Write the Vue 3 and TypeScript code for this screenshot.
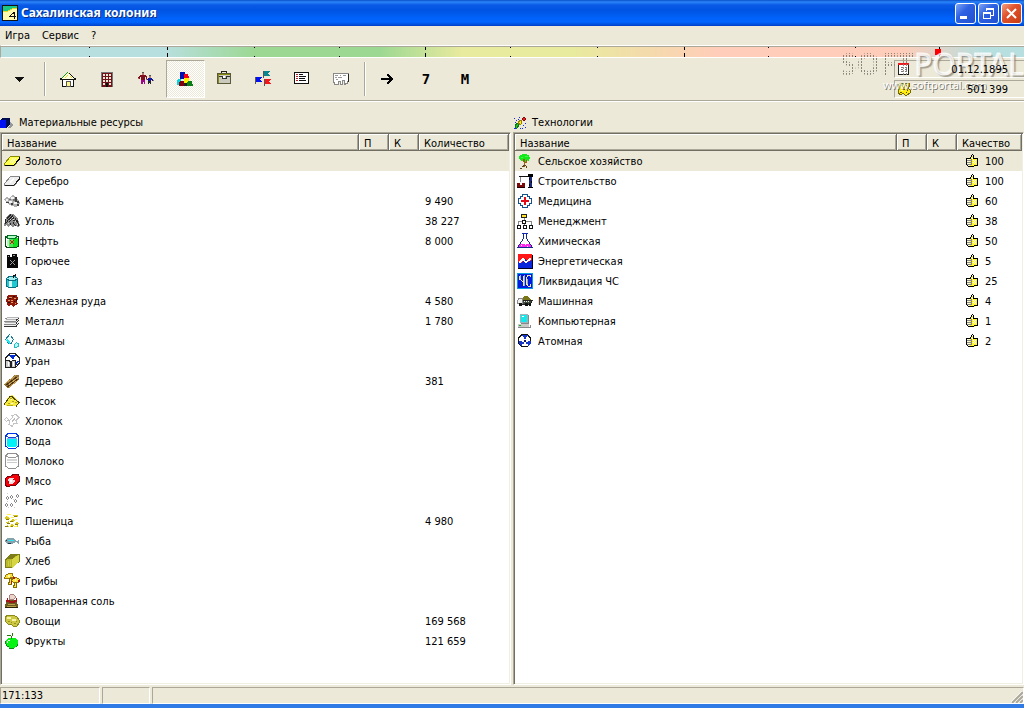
<script setup lang="ts">
import { ref } from 'vue'

// [path data, fill, stroke]
type Shape = [string, string, string?]

const icons: Record<string, Shape[]> = {
  gold: [['M6.5 3.5H15.5V5.5L10.5 12.5H.5V10.5Z', '#ffff50', '#8a8a00'], ['M15.5 4V6L9.5 12.5H.5', 'none', '#000'], ['M6 9.5L9 5.5M8 10L12 5', 'none', '#ffffd0']],
  silver: [['M6.5 3.5H15.5V5.5L10.5 12.5H.5V10.5Z', '#eee', '#888'], ['M15.5 4V6L9.5 12.5H.5', 'none', '#222'], ['M6 9.5L10 5.5', 'none', '#fff']],
  stone: [['M0 6L3 4 5 6 8 2 11 3 12 6 15 7 16 11 12 14 8 13 5 12 2 9Z', '#b0b0b0'], ['M2 6h2v2h-2zM7 4h3v2h-3zM5 8h3v2h-3zM10 9h3v2h-3z', '#f4f4f4'], ['M11 4h2v4h2v2h-2v-1h-2zM7 10h2v2h-2zM2 9h3v1h-3zM13 11h2v2h-2z', '#404040'], ['M5 6h2v1h-2zM9 6h2v2h-2z', '#707070']],
  coal: [['M6 1H9L12 3 14 6 16 12 14 14 11 12 9 15 7 12 4 14 3 12 0 13 1 7 3 3Z', '#8c8c8c'], ['M7 1.5L3 5.5M9 2.5L4.5 7M10 4.5L5 9M2 6.5L1 11M4 7.5L2.5 10M6 9.5V12M9 6.5L12 9M11 5.5L14 10M9 9.5L12 13M13 7.5L15 13', 'none', '#262626'], ['M8 4h1v1H8zM6 6h1v1H6zM9 6h1v1H9zM11 8h1v1h-1zM4 10h1v1H4zM13 11h1v1h-1z', '#ddd']],
  oil: [['M2 4.5L4 2H12L14.5 4V13L12.5 14.5H3L1.5 13V4Z', '#fff', '#0a4a12'], ['M9 5h5v8l-2 1H9z', '#10e020'], ['M3 7h2v6h-2z', '#b8f5b8'], ['M5 6h4v8H5z', '#48e858'], ['M3 3.5L5 2.5H12L13 4L11 5.5H4Z', '#b0ffc0', '#087830'], ['M6 7h1v1H6zM9 7h1v1H9zM7 8h2v2H7zM6 10h1v1H6zM9 10h1v1H9z', '#e01010']],
  fuel: [['M3 2H6V4H8V1H13V4H14V14.5H3Z', '#080808'], ['M6 7h1v1H6zM10 7h1v1h-1zM7 8h1v1H7zM9 8h1v1H9zM8 9h1v1H8zM7 10h1v1H7zM9 10h1v1H9zM6 11h1v1H6zM10 11h1v1h-1z', '#999'], ['M4 3.5H5M9 2.5H11', 'none', '#999']],
  gas: [['M2.5 5.5H13.5V13L11 14.5H5L2.5 13Z', '#20c8d0', '#087080'], ['M5 7h3v7H5z', '#d8ffff'], ['M2.5 5.5L5 3.5H11L13.5 5.5L11 7.5H5Z', '#a0eeee', '#087080'], ['M9.5 4.5V2.5H11.5V1', 'none', '#111']],
  ore: [['M4 2H13L14 5 13 9 14 11 11 12 9 14 8 12 4 13 3 10 2 7Z', '#901808'], ['M5 4.5H8M10 5.5H12M4 7.5H6M7 9.5H9M11 10.5H12M7 7.5H9', 'none', '#dba070'], ['M9 3.5H11M5 5.5H7M4 9.5H6M10 8.5H11M12.5 6V8', 'none', '#281008']],
  metal: [['M3 4H15V10L12 13H0V10Z', '#f0f0f0'], ['M3 4.5H15M2 6.5H13M1 9.5H12', 'none', '#b5b5b5'], ['M1 5.5H3M0 8.5H12M0 11.5H12', 'none', '#888'], ['M0 13.5H12L15 10M12 10.5L15 7M12 7.5L15 5', 'none', '#333']],
  diamond: [['M1.5 6.5L5.5 1.5L9.5 6.5L7 10.5H5Z', '#e8ffff', '#1c7a94'], ['M3 6L6 8V12L2 8Z', '#20e8f0'], ['M6 2V10', 'none', '#fff'], ['M10.5 11.5L12.5 9.5L14.5 11V13L12.5 14.5H11L10 13Z', '#b0ffff', '#28bcc4']],
  uranium: [['M6 .5H11L15.5 5V10L11.5 14.5H6L1.5 10V5Z', '#fff', '#222'], ['M5 2H12L9 7ZM10 9L15 8L12 13ZM6 8L2 7V9Z', '#002bd2'], ['M1.5 8.5L3 7.5H5L6.5 9V14.5H1.5ZM7.5 8.5L9 7.5H11L11.5 9V14.5H7.5Z', '#ccc', '#222'], ['M4 9V13M9.5 9V13', 'none', '#fff']],
  wood: [['M0 11L11 2H15V7L5 15H3Z', '#94713a'], ['M1 10.5L12 2.5M5 11.5L15 4M5 14.5L14 7', 'none', '#c9a155'], ['M2 12L13 4M3 14L14 6', 'none', '#4a3310']],
  sand: [['M5 3L8 2 10 4 13 6 15 9 12 13 2 13 0 11Z', '#f4e93c'], ['M0 11.5L6 3.5H8L10 5.5L15 9.5L12 13.5', 'none', '#4c4300'], ['M6 5.5H8M8 8.5H10M4 10.5H6M11 9.5H13M3 12.5H9', 'none', '#b1a51b'], ['M7 6h1v1H7zM7 10h2v1H7z', '#fff']],
  cotton: [['M.5 6.5L2.5 4.5L4.5 6.5L2.5 8.5ZM5.5 7.5L8.5 4.5L8 2.5L12 1.5L15 4.5L12 7.5L13 10.5L9.5 10.5L8.5 13.5L5 11.5Z', '#fff', '#c4c4c4'], ['M8 8.5L11 5.5M3 7.5H6', 'none', '#bbb']],
  water: [['M1.5 3V13L4 15H12L14.5 13V3L12 .5H4Z', '#fff', '#0034e6'], ['M3 6H13V13L11 14H5L3 13Z', '#00f2f8'], ['M2 3h2v1H2zM4 4h8v1H4zM12 3h2v1h-2z', '#1848d0'], ['M3 5.5H13', 'none', '#8af']],
  milk: [['M1.5 3V13L4 15H12L14.5 13V3L12 .5H4Z', '#fff', '#909090'], ['M3 6H13V8H3Z', '#d6d6d6'], ['M2 3h2v1H2zM4 4h8v1H4zM12 3h2v1h-2z', '#999'], ['M3 9.5H13', 'none', '#ccc']],
  meat: [['M1 6L4 3L7 3L10 1H14L15.5 4V8L12 12L8 12L4 14L1 12Z', '#f40008', '#760008'], ['M5 5h5l1 3-3 3H5L4 8z', '#f0dede'], ['M6 7h2v2H6z', '#fff'], ['M4 8h1v2H4zM9 6h1v1H9z', '#b00']],
  rice: [['M3 3h1v1H3zM2 4h1v2H2zM4 4h1v2H4zM3 6h1v1H3zM7 2h1v1H7zM6 3h1v2H6zM8 3h1v2H8zM7 5h1v1H7zM13 1h1v1h-1zM12 2h1v2h-1zM14 2h1v2h-1zM13 4h1v1h-1zM2 10h1v1H2zM1 11h1v2H1zM3 11h1v2H3zM2 13h1v1H2zM7 10h1v1H7zM6 11h1v2H6zM8 11h1v2H8zM7 13h1v1H7zM11 6h1v1h-1zM10 7h1v2h-1zM12 7h1v2h-1zM11 9h1v1h-1z', '#8a8a8a'], ['M3 .5H4M9 6.5H10M3 8.5H4M4 14.5H5M10 14.5H11', 'none', '#ccc']],
  wheat: [['M1 4.5L3 3L6 5L5 7H2ZM9 2.5L12 1.5L15 3L12 4ZM6 8L9 6L11 8L8 9ZM2 9L5 8L6 11H3ZM10 10L14 9L15 11L12 12ZM7 11L10 12L9 14H6ZM1 13L4 12L5 14H2ZM11 13L14 12V14H11Z', '#d8c81c'], ['M2 6.5H5M10 3.5H13M6 8.5H9M3 10.5H6M11 11.5H14M7 13.5H9M1 13.5H4', 'none', '#8a7a06'], ['M3 1.5H7M7 4.5H10M11 6.5H13M6 12.5H7M10 13.5H13M3 3.5H4', 'none', '#fff050']],
  fish: [['M0 8L4 5H9L13 8L15 6V11L12 9L8 11H3Z', '#84a3ad'], ['M4 7H10V8H4z', '#30e3f0'], ['M2 7h1v1H2zM4 10h3v1H4z', '#234']],
  bread: [['M1.5 7L7 1.5H15.5V8L8 14.5H1.5Z', '#b8b82c', '#7c7c18'], ['M1 6L7 1H15L8 6Z', '#7c7c18'], ['M8 6V15L15 9V2Z', '#d6d642'], ['M4 8V13M6 7V13', 'none', '#cdcd40']],
  mushroom: [['M.5 5L2 2L5 .5H8L9.5 4L6 5H3ZM7.5 8L9 5L12 4.5L15 6V9L11 10Z', '#ffe43b', '#947309'], ['M5 5H7V11H4V9H5ZM10 9H12V14H9V12H10Z', '#ffe83b', '#806b09'], ['M9 4h2v2H9zM14 7h2v2h-2zM7 8h1v3H7z', '#b01818'], ['M4 2h2v2H4zM11 6h1v2h-1z', '#fffac0']],
  salt: [['M4 7L2 10L1 13L2 15H13L14 13L13 9L11 7Z', '#6d5c20'], ['M5 3L7 1H9L12 4L10 6H5Z', '#ead4cb', '#a8827a'], ['M3 5H4V7H6V8H10V7H12V5H13V9H11V10H5V9H2V7H3Z', '#a01515'], ['M4 11.5H11M3 13.5H12', 'none', '#b8a146'], ['M1 14.5H14', 'none', '#2c2309']],
  vegetable: [['M1 4L4 2H9L13 4L15 7V10L13 13H9L7 11H4L1 8Z', '#cdc843', '#8e8a1a'], ['M3 4h4v2H3zM8 6h4v2H8z', '#f5f2a5'], ['M4 8h2v1H4zM10 10h2v1h-2zM7 9h1v1H7zM12 8h1v1h-1z', '#98911d']],
  apple: [['M2 7L4 5H6L7 6L9 5H12L14 8V11L12 14L9 15H6L3 13L2 11Z', '#08f215'], ['M1 8h1v3H1zM2 11h1v2H2zM3 13h2v1H3zM5 15h5v1H5zM12 13h1v1h-1zM13 11h1v2h-1z', '#098a15'], ['M4 7h2v1H4zM3 8h1v2H3z', '#eaffec'], ['M7.5 6V3.5L8.5 2V0M3 2.5H7', 'none', '#297609']],
  agro: [['M3 2L7 1L12 2L13 5L12 8L9 7L10 10L7 9L4 8L2 5Z', '#16e91b'], ['M4 4h2v1H4zM8 3h3v1H8zM9 7h2v1H9z', '#38ff40'], ['M7.5 6V14M9 7V9H8M6 6V8H7', 'none', '#a45a1a'], ['M3 15h2v1H3zM5 13h2v1H5zM9 13h1v2H9zM6 12h3v1H6z', '#5b4518']],
  building: [['M1.5 3.5H14', 'none', '#111'], ['M3.5 4V9', 'none', '#888'], ['M11 1H16V4H11ZM11 14H16V15H11Z', '#000'], ['M12 4H15V14H12Z', '#1a2a78'], ['M12 5h1v2h-1zM14 8h1v2h-1zM12 11h1v2h-1z', '#000'], ['M0 10H3V12H5V10H8V15H0Z', '#7a0a0a'], ['M0 14.5H8', 'none', '#200']],
  medicine: [['M5.5 1.5H10.5V3.5H12.5V5.5H14.500V10.5H12.5V12.5H10.5V14.5H5.5V12.5H3.5V10.5H1.5V5.5H3.5V3.5H5.5Z', '#fff', '#15508b'], ['M7 4H9V7H12V9H9V12H7V9H4V7H7Z', '#e20c18']],
  management: [['M7.5 4V8M1.5 12V8.5H14.5V12M7.5 8V12', 'none', '#888'], ['M4.5 1.5H9.5V4.5H4.5Z', '#ffe52e', '#222'], ['M5.500 7.5H8.5V10.5H5.5ZM.5 12.5H3.5V15.5H.5ZM6.5 12.5H9.5V15.5H6.5ZM12.5 12.5H15.5V15.5H12.5Z', '#fff', '#111']],
  chemistry: [['M6.5 1V5.5L.5 14.5H15.5L9.5 5.5V1', '#fff', '#102a90'], ['M5 .5H11', 'none', '#102ab0'], ['M3 11H13L14.5 14H1.5Z', '#ff28ed'], ['M4 12h1v1H4zM8 11h1v1H8zM10 13h1v1h-1z', '#fff']],
  energy: [['M1 1H15V15H1Z', '#0826dc'], ['M1 1H15V7L11 9L8 6L4 10L1 9Z', '#ff1717'], ['M2.5 9L6 5.5L9 9L13.5 5', 'none', '#fff'], ['M2.5 10L6 6.5L9 10L13.5 6', 'none', '#fff'], ['M1 15.5H15.5V2', 'none', '#002']],
  emergency: [['M.5 .5H15.5V15.5H.5Z', '#001be0', '#0898e8'], ['M2.5 2.5V6L5 8H6.5V13M6.5 2.5V8M13.5 4V2.5H11L9.5 5V11L11 13H13.5V11', 'none', '#f5e5a0'], ['M3.5 2V6M7.5 2V13M10.5 6V11', 'none', '#9aafc8']],
  machine: [['M4 6L8 3H11L14 7H5Z', '#7a7718'], ['M5 7H15.5L13.5 11H5Z', '#3f4a3c', '#222'], ['M.5 7.5L2 5.5H5V10.5H.5Z', '#eee', '#888'], ['M2 10h3v3H2zM8 10h3v3H8zM12 10h2v3h-2z', '#111'], ['M7 8h1v1H7zM9 8h1v1H9zM11 8h1v1h-1z', '#eee']],
  computer: [['M3.5 1.5H10.5V9.5H3.5Z', '#12e9ed', '#a0b4b8'], ['M1 11H12V14H1ZM5 10H9V11H5Z', '#c8c8c8'], ['M11.5 2V10M4 10.5H12M1 14.5H13V12', 'none', '#888'], ['M2 12h2v1H2z', '#10b510'], ['M5 3h2v1H5z', '#fff']],
  atomic: [['M5 1.5H10L13.5 5V10L10.5 13.5H5L1.5 10V5Z', '#fff', '#111'], ['M5 2H11L10 4H9V6H7V4H6ZM2 8H5V9H7V11H5V13H4L2 10ZM9 9H11V8H14V10L12 13H11V11H9Z', '#1538ca'], ['M7 7H9V9H7Z', '#101060']],
  thumb: [['M6 3H9V6H13V13H10V14H3V12H2V6H5Z', '#fff52e'], ['M2 6H5V13H3V12H2Z', '#fffdd0'], ['M7 1h1v1H7zM6 2h1v2H6zM8 2h1v4H8zM5 4h1v2H5zM9 5h4v1H9zM12 6h1v7h-1zM9 12h3v1H9zM3 13h6v1H3zM2 12h1v1H2zM1 5h4v1H1zM1 6h1v6H1z', '#000'], ['M2 7.5H6M2 9.5H6M2 11.5H6M6.5 6V12', 'none', '#888'], ['M8 7h1v1H8zM10 7h1v1h-1zM9 8h1v1H9zM8 9h1v1H8zM10 9h1v1h-1zM9 10h1v1H9zM7 5h1v1H7z', '#fff']],
  cube: [['M0 4H6V12H0Z', '#0010f0'], ['M0 4L3 2H10L6 4ZM6 4L10 2V9L6 12Z', '#000c50'], ['M10 6L13 9V10L10 12H7L10 9Z', '#999']],
  tech: [['M2 9L5 7L6 9L4 12H2Z', '#20c030', '#087818'], ['M5 6L8 4L9 7L7 9Z', '#ffea20', '#9a8208'], ['M9 3L11 1L13 3L11 5Z', '#e02020', '#8a0808'], ['M1 2.5H2M3 4.5H4M6 1.5H7M10 9.5H11M12 11.5H13M9 12.5H10M1 12.5H3M12 7.5H13M5 3.5H6M7 12.5H8M2 6.5H3', 'none', '#1028f0']],
  home: [['M2.5 7V15.5H13.5V7', '#fff', '#111'], ['M0 8h16v1H0zM0 7h2v1H0zM14 7h2v1h-2z', '#111'], ['M7 1h2v1h1v1h1v1h1v1h1v1h1v2H2V6h1V5h1V4h1V3h1V2h1z', '#fffde0'], ['M7 1h1v1H7zM6 2h1v1H6zM5 3h1v1H5zM4 4h1v1H4zM3 5h1v1H3zM2 6h1v1H2z', '#159515'], ['M9 2h1v1H9zM10 3h1v1h-1zM11 4h1v1h-1zM12 5h1v1h-1zM13 6h1v1h-1z', '#111'], ['M8 2h1v1H8zM7 4h1v1H7zM6 5h1v1H6zM5 6h1v1H5zM10 5h1v1h-1zM11 6h1v1h-1z', '#e8dc28'], ['M6.5 10.5H10V15.5H6.5Z', '#fff68c', '#555']],
  block: [['M2 1H14V16H2Z', '#701217'], ['M2.5 15.5V1.5H13.5V16', 'none', '#777'], ['M4 3h2v2H4zM7 3h2v2H7zM10 3h2v2h-2zM4 6h2v2H4zM7 6h2v2H7zM10 6h2v2h-2zM4 9h2v2H4zM7 9h2v2H7zM10 9h2v2h-2zM4 12h2v2H4zM10 12h2v2h-2z', '#ece9d8'], ['M7 12h2v4H7z', '#111']],
  people: [['M4 1H6V3H4ZM11 4H13V6H11Z', '#555'], ['M4 2h2v2H4zM11 5h2v2h-2z', '#b97f6e'], ['M2 4H8V5H9V8H8V6H7V9H3V6H2V8H0V6H1V5H2Z', '#801020'], ['M3 9H7V13H6V11H5V13H3Z', '#a0068c'], ['M10 7H14V8H15V10H14V9H13V11H10V9H8V8H10Z', '#12189a'], ['M10 10H13V13H12V12H11V13H10Z', '#25252a'], ['M0 7h1v1H0zM8 8h1v1H8zM15 9h1v1h-1z', '#a87060']],
  blocks: [['M3 1H8L9 4V8H3V4Z', '#0010ae'], ['M7 3H11L12 7H7Z', '#f40015'], ['M7 7H12L13 12H7Z', '#ffef00'], ['M0 9L2 8H4V11L2 14H0Z', '#00d4de'], ['M2 11L4 10H7V15H2Z', '#80000b'], ['M10 11L12 10H15L16 15H10Z', '#087e15'], ['M7 12H10V15H7Z', '#222']],
  briefcase: [['M1.5 2.5H14.5V12.5H1.5Z', '#cac9bd', '#5b5a36'], ['M5.5 2V.5H10.5V2', 'none', '#222'], ['M2 5.5H6V7H10V5.5H14', 'none', '#333'], ['M2 3.5H14M2.5 12V4', 'none', '#8c8910'], ['M7 5h2v2H7z', '#fff']],
  flags: [['M8 0H15V1H14V2H13V3H14V4H15V5H8Z', '#0a858d'], ['M0 6H7V7H6V8H5V9H6V10H7V11H0Z', '#0010ef'], ['M9 8H16V9H15V10H14V11H15V12H16V13H9Z', '#f4161b'], ['M8.5 0V7M.5 6V13M9.5 8V15', 'none', '#555']],
  list: [['M.5 1.5H14.5V12.5H.5Z', '#fff', '#111'], ['M2 3.5H4M2 5.5H4M2 7.5H4M2 9.5H4', 'none', '#b02126'], ['M5 3.5H9M5 5.5H12M5 7.5H11M5 9.5H12', 'none', '#111']],
  note: [['M.5 2.5H15.5V10.5H14.5V12.5H12.5V13.5H11.5V9.5H9.5V13.5H7.5V10.5H5.5V13.5H1.5V11.5H.5Z', '#fff', '#888'], ['M2 4.5H5M7 4.5H8M10 4.5H13M2 6.5H4M5 6.5H9M3 8.500H5', 'none', '#999'], ['M15.5 3V11', 'none', '#222']],
  arrow: [['M2 7H10V6H9V5H8V3H10V4H11V5H12V6H13V7H14V9H13V10H12V11H11V12H10V13H8V11H9V10H10V9H2Z', '#000']],
  calendar: [['M1.5 2.5H11.5V13.5H1.5Z', '#fff', '#222'], ['M1 2H12V4H1Z', '#ec1b20'], ['M4 6.5H6M8 6.5H10M4 8.5H6M8 8.5H10M4 10.5H6M8 10.5H10', 'none', '#777']],
  coins: [['M1 4L3 2H6L7 4L9 2H12L13 5L11 7L13 9V12L10 14H8L6 12L4 14L1 12L2 8Z', '#ffeb10', '#736a05'], ['M4 4.5H5M9 4.5H10M6 8.5H8M3 11.5H5M9 11.5H10M6 6.5H7M10 9.5H11', 'none', '#5b5205'], ['M4 9h2v1H4zM9 6h2v1H9z', '#fff9b0']],
}

const resources = [
  ['gold', 'Золото', ''], ['silver', 'Серебро', ''], ['stone', 'Камень', '9 490'], ['coal', 'Уголь', '38 227'],
  ['oil', 'Нефть', '8 000'], ['fuel', 'Горючее', ''], ['gas', 'Газ', ''], ['ore', 'Железная руда', '4 580'],
  ['metal', 'Металл', '1 780'], ['diamond', 'Алмазы', ''], ['uranium', 'Уран', ''], ['wood', 'Дерево', '381'],
  ['sand', 'Песок', ''], ['cotton', 'Хлопок', ''], ['water', 'Вода', ''], ['milk', 'Молоко', ''], ['meat', 'Мясо', ''],
  ['rice', 'Рис', ''], ['wheat', 'Пшеница', '4 980'], ['fish', 'Рыба', ''], ['bread', 'Хлеб', ''], ['mushroom', 'Грибы', ''],
  ['salt', 'Поваренная соль', ''], ['vegetable', 'Овощи', '169 568'], ['apple', 'Фрукты', '121 659'],
]
const technologies = [
  ['agro', 'Сельское хозяйство', '100'], ['building', 'Строительство', '100'], ['medicine', 'Медицина', '60'],
  ['management', 'Менеджмент', '38'], ['chemistry', 'Химическая', '50'], ['energy', 'Энергетическая', '5'],
  ['emergency', 'Ликвидация ЧС', '25'], ['machine', 'Машинная', '4'], ['computer', 'Компьютерная', '1'], ['atomic', 'Атомная', '2'],
]
const panels = [
  { id: 'res', icon: 'cube', title: 'Материальные ресурсы', last: 'Количество', rated: false, rows: resources },
  { id: 'tech', icon: 'tech', title: 'Технологии', last: 'Качество', rated: true, rows: technologies },
]
const selected = ref([0, 0])

const tools = [
  ['home', 'Дом'], ['block', 'Здания'], ['people', 'Население'], ['blocks', 'Ресурсы'],
  ['briefcase', 'Бюджет'], ['flags', 'Флаги'], ['list', 'Список'], ['note', 'Заметки'],
]
const activeTool = ref('blocks')

// Season scale marks in percent of the strip; long ones separate the seasons
const ticks = [8.6, 16.2, 24.7, 33, 41.4, 49.8, 58.3, 66.8, 75, 83.5, 91.7]
const isLong = (i: number) => i % 3 === 1
</script>

<template>
  <div class="window">
    <header class="titlebar">
      <svg class="logo" viewBox="0 0 16 16" shape-rendering="crispEdges">
        <path d="M0 0H16V16H0Z" fill="#111" />
        <path d="M1 1H15V15H1Z" fill="#fffab0" />
        <path d="M1 1H15V3L10 4L6 6L1 7Z" fill="#18c884" />
        <path d="M1 7L6 6L10 4L15 3" fill="none" stroke="#e8dc28" />
        <path d="M11 7h2v4h1v1h-1v2h-1v-2H7v-1h1v-1h1V9h1V8h1zM11 9h-1v1H9v1h3V9z" fill="#111" />
      </svg>
      <h1>Сахалинская колония</h1>
      <div class="controls">
        <button type="button" aria-label="Свернуть">
          <svg viewBox="0 0 19 19"><path d="M4 12H11V15H4Z" fill="#fff" /></svg>
        </button>
        <button type="button" aria-label="Восстановить">
          <svg viewBox="0 0 19 19" shape-rendering="crispEdges"><path d="M7.5 7V4.5H14.5V11.5H12M7 5.5H15M4.5 8.5H11.5V14.5H4.5ZM4 9.5H12" fill="none" stroke="#fff" /></svg>
        </button>
        <button type="button" class="close" aria-label="Закрыть">
          <svg viewBox="0 0 19 19"><path d="M5 5L14 14M14 5L5 14" fill="none" stroke="#fff" stroke-width="2" /></svg>
        </button>
      </div>
    </header>

    <nav class="menu">
      <button type="button">Игра</button>
      <button type="button">Сервис</button>
      <button type="button">?</button>
    </nav>

    <svg class="seasons" shape-rendering="crispEdges">
      <template v-for="(t, i) in ticks" :key="t">
        <rect :x="t + '%'" y="0" width="1" :height="isLong(i) ? 3 : 1" />
        <rect :x="t + '%'" :y="isLong(i) ? 6 : 9" width="1" :height="isLong(i) ? 4 : 1" />
      </template>
      <rect x="91.3%" y="2" width="6" height="6" fill="#f00" />
    </svg>

    <div class="toolbar">
      <button type="button" class="tool" aria-label="Меню">
        <svg viewBox="0 0 16 16" shape-rendering="crispEdges"><path d="M3 6H12V7H11V8H10V9H9V10H8V11H7V10H6V9H5V8H4V7H3Z" fill="#111" /></svg>
      </button>
      <span class="divider"></span>
      <button
        v-for="[name, label] in tools" :key="name" type="button" class="tool"
        :class="{ active: activeTool === name }" :aria-label="label" @click="activeTool = name"
      >
        <svg viewBox="0 0 16 16" shape-rendering="crispEdges">
          <path v-for="(s, i) in icons[name]" :key="i" :d="s[0]" :fill="s[1]" :stroke="s[2]" />
        </svg>
      </button>
      <span class="divider second"></span>
      <button type="button" class="tool" aria-label="Далее">
        <svg viewBox="0 0 16 16" shape-rendering="crispEdges">
          <path v-for="(s, i) in icons.arrow" :key="i" :d="s[0]" :fill="s[1]" />
        </svg>
      </button>
      <button type="button" class="tool letter">7</button>
      <button type="button" class="tool letter">М</button>
      <div class="readouts">
        <div class="readout">
          <svg viewBox="0 0 16 16" shape-rendering="crispEdges">
            <path v-for="(s, i) in icons.calendar" :key="i" :d="s[0]" :fill="s[1]" :stroke="s[2]" />
          </svg>
          <span>01.12.1895</span>
        </div>
        <div class="readout">
          <svg viewBox="0 0 16 16" shape-rendering="crispEdges">
            <path v-for="(s, i) in icons.coins" :key="i" :d="s[0]" :fill="s[1]" :stroke="s[2]" />
          </svg>
          <span>501 399</span>
        </div>
      </div>
      <div class="watermark">
        <div class="brand"><span class="dots">SOFT</span><span class="solid">PORTAL</span></div>
        <div class="site">www.softportal.com</div>
      </div>
    </div>

    <main class="panels">
      <section v-for="(p, n) in panels" :key="p.id" class="panel">
        <h2 :id="p.id">
          <svg viewBox="0 0 14 14" shape-rendering="crispEdges">
            <path v-for="(s, i) in icons[p.icon]" :key="i" :d="s[0]" :fill="s[1]" :stroke="s[2]" />
          </svg>
          {{ p.title }}
        </h2>
        <div class="list">
          <table :aria-labelledby="p.id">
            <colgroup>
              <col /><col class="narrow" /><col class="narrow" /><col :class="p.rated ? 'quality' : 'amount'" />
            </colgroup>
            <thead>
              <tr><th>Название</th><th>П</th><th>К</th><th>{{ p.last }}</th></tr>
            </thead>
            <tbody>
              <tr v-for="(row, r) in p.rows" :key="row[0]" :class="{ selected: selected[n] === r }" @click="selected[n] = r">
                <td>
                  <div class="name">
                    <svg viewBox="0 0 16 16" shape-rendering="crispEdges">
                      <path v-for="(s, i) in icons[row[0]]" :key="i" :d="s[0]" :fill="s[1]" :stroke="s[2]" />
                    </svg>
                    <span>{{ row[1] }}</span>
                  </div>
                </td>
                <td></td>
                <td></td>
                <td>
                  <div class="value">
                    <svg v-if="p.rated" viewBox="0 0 16 16" shape-rendering="crispEdges">
                      <path v-for="(s, i) in icons.thumb" :key="i" :d="s[0]" :fill="s[1]" :stroke="s[2]" />
                    </svg>
                    <span>{{ row[2] }}</span>
                  </div>
                </td>
              </tr>
            </tbody>
          </table>
        </div>
      </section>
    </main>

    <footer class="status">
      <span class="coords">171:133</span>
      <span class="cell"></span>
      <span class="rest">
        <svg viewBox="0 0 12 12"><path d="M0 12L12 0M4 12L12 4M8 12L12 8" stroke="#fff" stroke-width="2" /><path d="M1 12L12 1M5 12L12 5M9 12L12 9" stroke="#aca899" stroke-width="2" /></svg>
      </span>
    </footer>
  </div>
</template>

<style>
body {
  margin: 0;
  background: #ece9d8;
}
</style>

<style scoped>
.window {
  display: flex;
  flex-direction: column;
  box-sizing: border-box;
  min-height: 100vh;
  overflow: hidden;
  background: #ece9d8;
  border-bottom: 4px solid #2f7ae5;
  color: #000;
  font-family: "DejaVu Sans Condensed", "DejaVu Sans", sans-serif;
  font-size: 11px;
  line-height: 14px;
  cursor: default;
}
svg {
  display: block;
  flex: none;
  width: 16px;
  height: 16px;
}
button {
  padding: 0;
  border: 0;
  background: none;
  color: inherit;
  font: inherit;
}
.titlebar {
  display: flex;
  align-items: center;
  gap: 3px;
  height: 26px;
  padding: 0 2px;
  background: linear-gradient(#0a50c8 0, #2b85fa 2px, #0a5ae6 5px, #0053e1 10px, #0062fa 18px, #0066ff 22px, #0040c8 26px);
}
.titlebar h1 {
  flex: 1;
  margin: 0;
  color: #fff;
  font: bold 12px/16px "Noto Sans", "Open Sans", sans-serif;
  text-shadow: 1px 1px #0a2c80;
}
.controls {
  display: flex;
  gap: 2px;
}
.controls button {
  box-sizing: border-box;
  width: 21px;
  height: 21px;
  border: 1px solid #fff;
  border-radius: 3px;
  background: linear-gradient(135deg, #7fa5f5, #2d62e3 40%, #2050d0);
}
.controls .close {
  background: linear-gradient(135deg, #f0a084, #e0532c 40%, #c83c14);
}
.controls svg {
  width: 19px;
  height: 19px;
}
.menu {
  display: flex;
  gap: 12px;
  height: 19px;
  padding-left: 5px;
}
.seasons {
  box-sizing: border-box;
  width: 100%;
  height: 13px;
  border-top: 1px solid #fff;
  border-bottom: 1px solid #fff;
  border-left: 1px solid #aca899;
  box-shadow: inset 0 1px #aca899;
  padding-top: 1px;
  background: linear-gradient(90deg, #b8dfdf 16%, #9cd892 25%, #9cd892 37%, #e8ea9e 45%, #e8ea9e 56%, #ffcdb9 70%, #ffcdb9 88%, #b8dfdf 96%);
}
.toolbar {
  position: relative;
  display: flex;
  align-items: center;
  height: 42px;
  padding-left: 1px;
  border-bottom: 1px solid #aca899;
  box-shadow: 0 1px #fff;
}
.tool {
  display: flex;
  align-items: center;
  justify-content: center;
  box-sizing: border-box;
  width: 39px;
  height: 38px;
  padding-right: 1px;
}
.tool.active {
  border: 1px solid #fff;
  border-top-color: #aca899;
  border-left-color: #aca899;
  background: repeating-conic-gradient(#fff 0 25%, #ece9d8 0 50%) 0 0 / 2px 2px;
}
.letter {
  font: bold 14px/16px "DejaVu Sans Mono", monospace;
}
.divider {
  width: 1px;
  height: 34px;
  margin: 0 4px;
  background: #aca899;
  box-shadow: 1px 0 #fff;
}
.divider.second {
  margin: 0 3px;
}
.readouts {
  display: flex;
  flex-direction: column;
  gap: 2px;
  width: 130px;
  margin-left: auto;
}
.readout {
  display: flex;
  align-items: center;
  justify-content: space-between;
  box-sizing: border-box;
  height: 18px;
  padding: 0 16px 0 2px;
  border-top: 1px solid #aca899;
  border-left: 1px solid #aca899;
  border-bottom: 1px solid #fff;
}
.readout span {
  position: relative;
  z-index: 1;
  padding-top: 2px;
}
.watermark {
  position: absolute;
  top: -12px;
  right: 0;
  width: 184px;
  pointer-events: none;
}
.brand {
  display: flex;
  height: 32px;
  font: 30px/36px "Noto Sans", "Open Sans", sans-serif;
}
.dots {
  width: 74px;
  background: conic-gradient(transparent 75%, #88857a 0) 0 0 / 3px 3px;
  background-clip: text;
  color: transparent;
  font-weight: bold;
}
.solid {
  color: rgba(255, 255, 255, 0.7);
  -webkit-text-stroke: 1px rgba(255, 255, 255, 0.7);
  text-shadow: 2px 2px 1px rgba(110, 105, 95, 0.6);
}
.site {
  padding-left: 43px;
  color: #fff;
  font: 11px/14px "Open Sans", sans-serif;
  text-shadow: 1px 1px #77746a;
}
.panels {
  display: grid;
  flex: 1;
  grid-template-columns: 1fr 1fr;
  gap: 2px;
  padding-top: 13px;
}
.panel {
  display: flex;
  flex-direction: column;
  min-width: 0;
}
.panel h2 {
  display: flex;
  align-items: center;
  gap: 5px;
  height: 18px;
  margin: 0;
  font-size: 11px;
  font-weight: normal;
}
.panel h2 svg {
  width: 14px;
  height: 14px;
}
.list {
  flex: 1;
  border-style: solid;
  border-width: 1px;
  border-color: #aca899 #fff #fff #aca899;
  padding: 1px;
  background: #fff;
  box-shadow: inset 1px 1px #716f64, inset -1px -1px #f1efe2;
}
table {
  width: 100%;
  table-layout: fixed;
  border-collapse: collapse;
}
.narrow {
  width: 30px;
}
.amount {
  width: 90px;
}
.quality {
  width: 65px;
}
th {
  height: 15px;
  padding: 2px 0 0 5px;
  background: #ece9d8;
  box-shadow: inset -1px -1px #716f64, inset 1px 1px #fff, inset -2px -2px #aca899;
  font-weight: normal;
  text-align: left;
}
td {
  height: 20px;
  padding: 0 0 0 2px;
}
td:last-child {
  padding-left: 6px;
}
.selected {
  background: #ece9d8;
}
.name,
.value {
  display: flex;
  align-items: center;
  gap: 5px;
}
.value {
  gap: 4px;
}
.name span,
.value span {
  padding-top: 2px;
}
.value svg {
  margin-left: 2px;
}
.status {
  display: flex;
  gap: 2px;
  height: 17px;
  padding-top: 2px;
}
.status span {
  box-sizing: border-box;
  border: 1px solid #fff;
  border-top-color: #aca899;
  border-left-color: #aca899;
}
.coords {
  width: 100px;
  padding-left: 1px;
  line-height: 16px;
}
.cell {
  width: 48px;
}
.rest {
  display: flex;
  flex: 1;
  align-items: flex-end;
  justify-content: flex-end;
}
.rest svg {
  width: 12px;
  height: 12px;
}
</style>
